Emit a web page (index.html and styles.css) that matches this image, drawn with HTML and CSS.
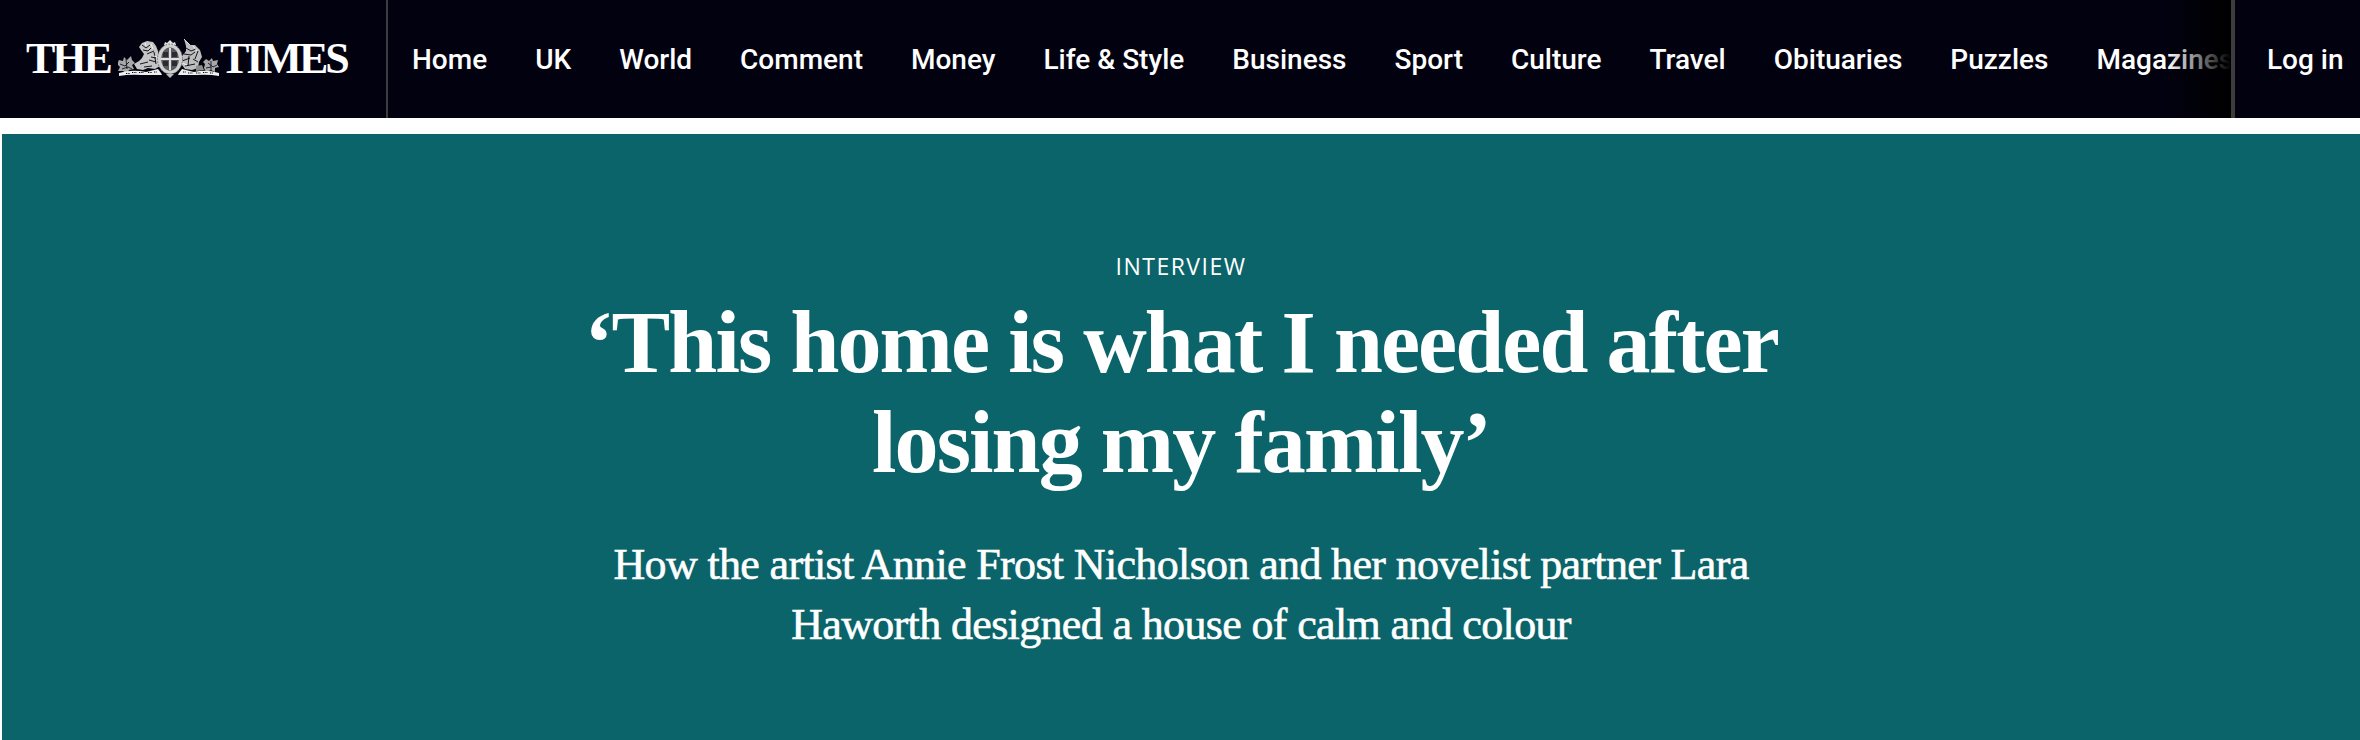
FILE: index.html
```html
<!DOCTYPE html>
<html lang="en">
<head>
<meta charset="utf-8">
<title>The Times</title>
<link rel="stylesheet" href="styles.css">
</head>
<body>
<header class="topbar">
  <a class="brand" href="#">
    <span class="brand-word">THE</span>
    <svg class="crest" viewBox="0 0 102 40" aria-hidden="true">
      <!-- left foliage -->
      <path d="M1 21l4 1 1-4 3 3 4-4 1 4 3 3-3 2 2 4-5 1-2 4-4-3-5 0 2-4-3-3z" fill="#a8a8a8"/>
      <path d="M2 25l5 2 4-4M8 20l1 10M4 30l6-2 4 2" fill="none" stroke="#02010f" stroke-width=".8"/>
      <!-- lion -->
      <path d="M21 8l3-4 5-2 6 1 3 4 2 5 1 6 1 9-5 3-7-1-5 2-6-1-3-5 5-3 3-3 2-4-3-4z" fill="#c4c4c4"/>
      <path d="M24 6l4 3 4-3M25 11l5 1 3-3M29 15l7-3M33 18l5 1M36 13l2 12M31 21l7 2M22 25l8-2M26 28l8-1" fill="none" stroke="#02010f" stroke-width=".9"/>
      <path d="M27 4l1 3M33 5l2 5M36 17l3 1" fill="none" stroke="#fff" stroke-width=".8"/>
      <!-- unicorn -->
      <path d="M66 0l6 6 5 0 5 5 2 7-3 5-1 6-6 2-7-1-3-4-2-5 3-5 3-4 0-5z" fill="#bdbdbd"/>
      <path d="M68 9l5 3 5-2M66 15l7 1 4-3M71 17l-1 10M64 22l8-3M75 20l5 3M67 27l10-2M80 12l-3 8" fill="none" stroke="#02010f" stroke-width=".9"/>
      <path d="M66 0l6 6M75 7l4 5M64 24l5 2" fill="none" stroke="#fff" stroke-width=".8"/>
      <path d="M78 27l6-1 2 5-8 1z" fill="#8d8d8d"/>
      <!-- right foliage -->
      <path d="M88 20l3 2 3-3 1 3 5-1-1 4 2 3-4 1 0 4-4-2-5 2-2-4 1-4-2-2z" fill="#a8a8a8"/>
      <path d="M90 24l5 4 4-2M93 22l0 9M88 29l5-1" fill="none" stroke="#02010f" stroke-width=".8"/>
      <!-- shield -->
      <path d="M46 6l1-3 2 1 3-3 3 3 2-1 1 3z" fill="#e4e4e4"/>
      <ellipse cx="52" cy="20" rx="12.5" ry="15" fill="#cfcfcf"/>
      <ellipse cx="52" cy="20" rx="12.5" ry="15" fill="none" stroke="#6a6a6a" stroke-width="1" stroke-dasharray="1.5 1.5"/>
      <ellipse cx="52" cy="20" rx="9" ry="11.5" fill="#5a5a60"/>
      <path d="M51 9h2v22h-2zM43 19h18v2H43z" fill="#dedede"/>
      <path d="M45 13h5v5h-5zM54 13h5v5h-5zM45 22h5v5h-5zM54 22h5v5h-5z" fill="#2b2b33"/>
      <path d="M48 35l4 4 4-4z" fill="#bdbdbd"/>
      <!-- ribbon -->
      <path d="M1 34Q14 30 28 33L40 30 43 34 44 36H24Q12 35 1 37ZM61 34L64 30 76 33Q88 30 101 34V37Q90 35 78 36H60Z" fill="#efefef"/>
      <path d="M8 34.500h4M14 33.500h5M21 33.500h5M30 33.500h4M36 33h3M65 33h3M70 34h5M78 34h5M85 33.500h5M92 34h3" fill="none" stroke="#02010f" stroke-width="1.200" stroke-dasharray="1 .7"/>
    </svg>
    <span class="brand-word">TIMES</span>
  </a>
  <nav class="nav">
    <a href="#">Home</a>
    <a href="#">UK</a>
    <a href="#">World</a>
    <a href="#">Comment</a>
    <a href="#">Money</a>
    <a href="#">Life &amp; Style</a>
    <a href="#">Business</a>
    <a href="#">Sport</a>
    <a href="#">Culture</a>
    <a href="#">Travel</a>
    <a href="#">Obituaries</a>
    <a href="#">Puzzles</a>
    <a href="#">Magazines</a>
  </nav>
  <a class="login" href="#">Log in</a>
</header>
<main class="hero">
  <p class="label">INTERVIEW</p>
  <h1 class="headline">‘This home is what I needed after<br>losing my family’</h1>
  <p class="standfirst">How the artist Annie Frost Nicholson and her novelist partner Lara<br>Haworth designed a house of calm and colour</p>
</main>
</body>
</html>
```
FILE: styles.css
```css
* { box-sizing: border-box; }
html, body { margin: 0; height: 100%; }
body { background: #fff; overflow: hidden; }
a { color: inherit; text-decoration: none; }

.topbar {
  display: flex;
  align-items: stretch;
  height: 118px;
  background: #02010f;
  color: #fff;
  font-family: Roboto, sans-serif;
  font-weight: 500;
  font-size: 28px;
}
.brand {
  flex: 0 0 388px;
  display: flex;
  align-items: center;
  padding-left: 26px;
  border-right: 2px solid #3c3c3c;
}
.brand-word {
  font-family: "Liberation Serif", serif;
  font-weight: 700;
  font-size: 44px;
  letter-spacing: -3px;
  line-height: 1;
}
.crest { flex: none; width: 102px; height: 40px; margin: 0 0 0 8px; }
.nav {
  position: relative;
  flex: 1;
  display: flex;
  align-items: center;
  gap: 48px;
  padding-left: 24px;
  overflow: hidden;
  white-space: nowrap;
}
.nav a { flex: none; }
.nav::after {
  content: "";
  position: absolute;
  top: 0; right: 0; bottom: 0;
  width: 64px;
  background: linear-gradient(to right, rgba(0,0,0,0), #000);
}
.login {
  flex: 0 0 129px;
  display: flex;
  align-items: center;
  padding-left: 32px;
  border-left: 4px solid #3c3c3c;
}

.hero {
  margin: 16px 0 0 2px;
  height: 606px;
  background: #0b646a;
  color: #fff;
  text-align: center;
  padding-top: 117px;
}
.label {
  margin: 0;
  font-family: "Open Sans", sans-serif;
  font-size: 23px;
  line-height: 30px;
  letter-spacing: 1.5px;
}
.headline {
  margin: 12px 0 0;
  font-family: "Liberation Serif", serif;
  font-weight: 700;
  font-size: 88px;
  line-height: 100px;
  letter-spacing: -1.9px;
}
.standfirst {
  margin: 42px 0 0;
  font-family: "Liberation Serif", serif;
  font-size: 44px;
  line-height: 60px;
  letter-spacing: -.65px;
  -webkit-text-stroke: .6px #fff;
}
```
